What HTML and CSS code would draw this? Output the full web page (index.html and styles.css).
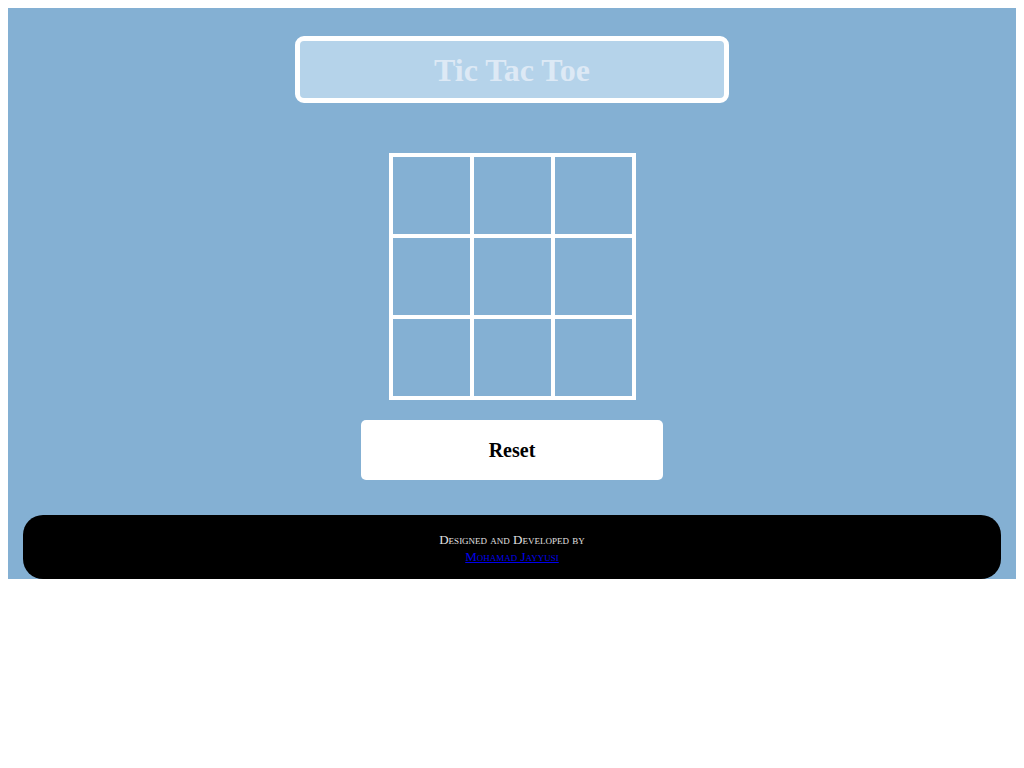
FILE: index.html
```html
<!DOCTYPE html>
<html>
<head>
<meta charset="utf-8">
<link rel="stylesheet" href="styles.css">
</head>
<body>
<div class="app">
  <div class="title-box"><h1 class="title">Tic Tac Toe</h1></div>
  <div class="board">
    <div class="cell"></div><div class="cell"></div><div class="cell"></div>
    <div class="cell"></div><div class="cell"></div><div class="cell"></div>
    <div class="cell"></div><div class="cell"></div><div class="cell"></div>
  </div>
  <button class="reset">Reset</button>
  <footer class="footer">
    <div class="credit">Designed and Developed by</div>
    <a class="author" href="#">Mohamad Jayyusi</a>
  </footer>
</div>
</body>
</html>
```
FILE: styles.css
```css
body {
  margin: 8px;
  font-family: "Liberation Serif", "Times New Roman", serif;
  background: #ffffff;
}
.app {
  background: #84b0d3;
  display: flex;
  flex-direction: column;
  align-items: center;
  padding-top: 28px;
}
.title-box {
  width: 424px;
  height: 57px;
  border: 5px solid #ffffff;
  border-radius: 9px;
  background: #b5d3ea;
  display: flex;
  align-items: center;
  justify-content: center;
}
.title {
  margin: 0;
  font-size: 32px;
  font-weight: bold;
  color: #dde9f5;
  line-height: 1;
}
.board {
  margin-top: 50px;
  border: 2px solid #ffffff;
  display: grid;
  grid-template-columns: repeat(3, 81px);
  grid-template-rows: repeat(3, 81px);
}
.cell {
  border: 2px solid #ffffff;
}
.reset {
  margin-top: 20px;
  width: 302px;
  height: 60px;
  border: none;
  border-radius: 5px;
  background: #ffffff;
  font-family: "Liberation Serif", "Times New Roman", serif;
  font-size: 20px;
  font-weight: bold;
  color: #000000;
  padding: 0;
}
.footer {
  margin-top: 35px;
  align-self: stretch;
  margin-left: 15px;
  margin-right: 15px;
  height: 64px;
  box-sizing: border-box;
  background: #000000;
  border-radius: 20px;
  display: flex;
  flex-direction: column;
  align-items: center;
  padding-top: 16px;
  font-size: 13px;
  font-variant: small-caps;
  line-height: 17px;
}
.credit {
  color: #e0e0e0;
}
.author {
  color: #0000ee;
}
```
